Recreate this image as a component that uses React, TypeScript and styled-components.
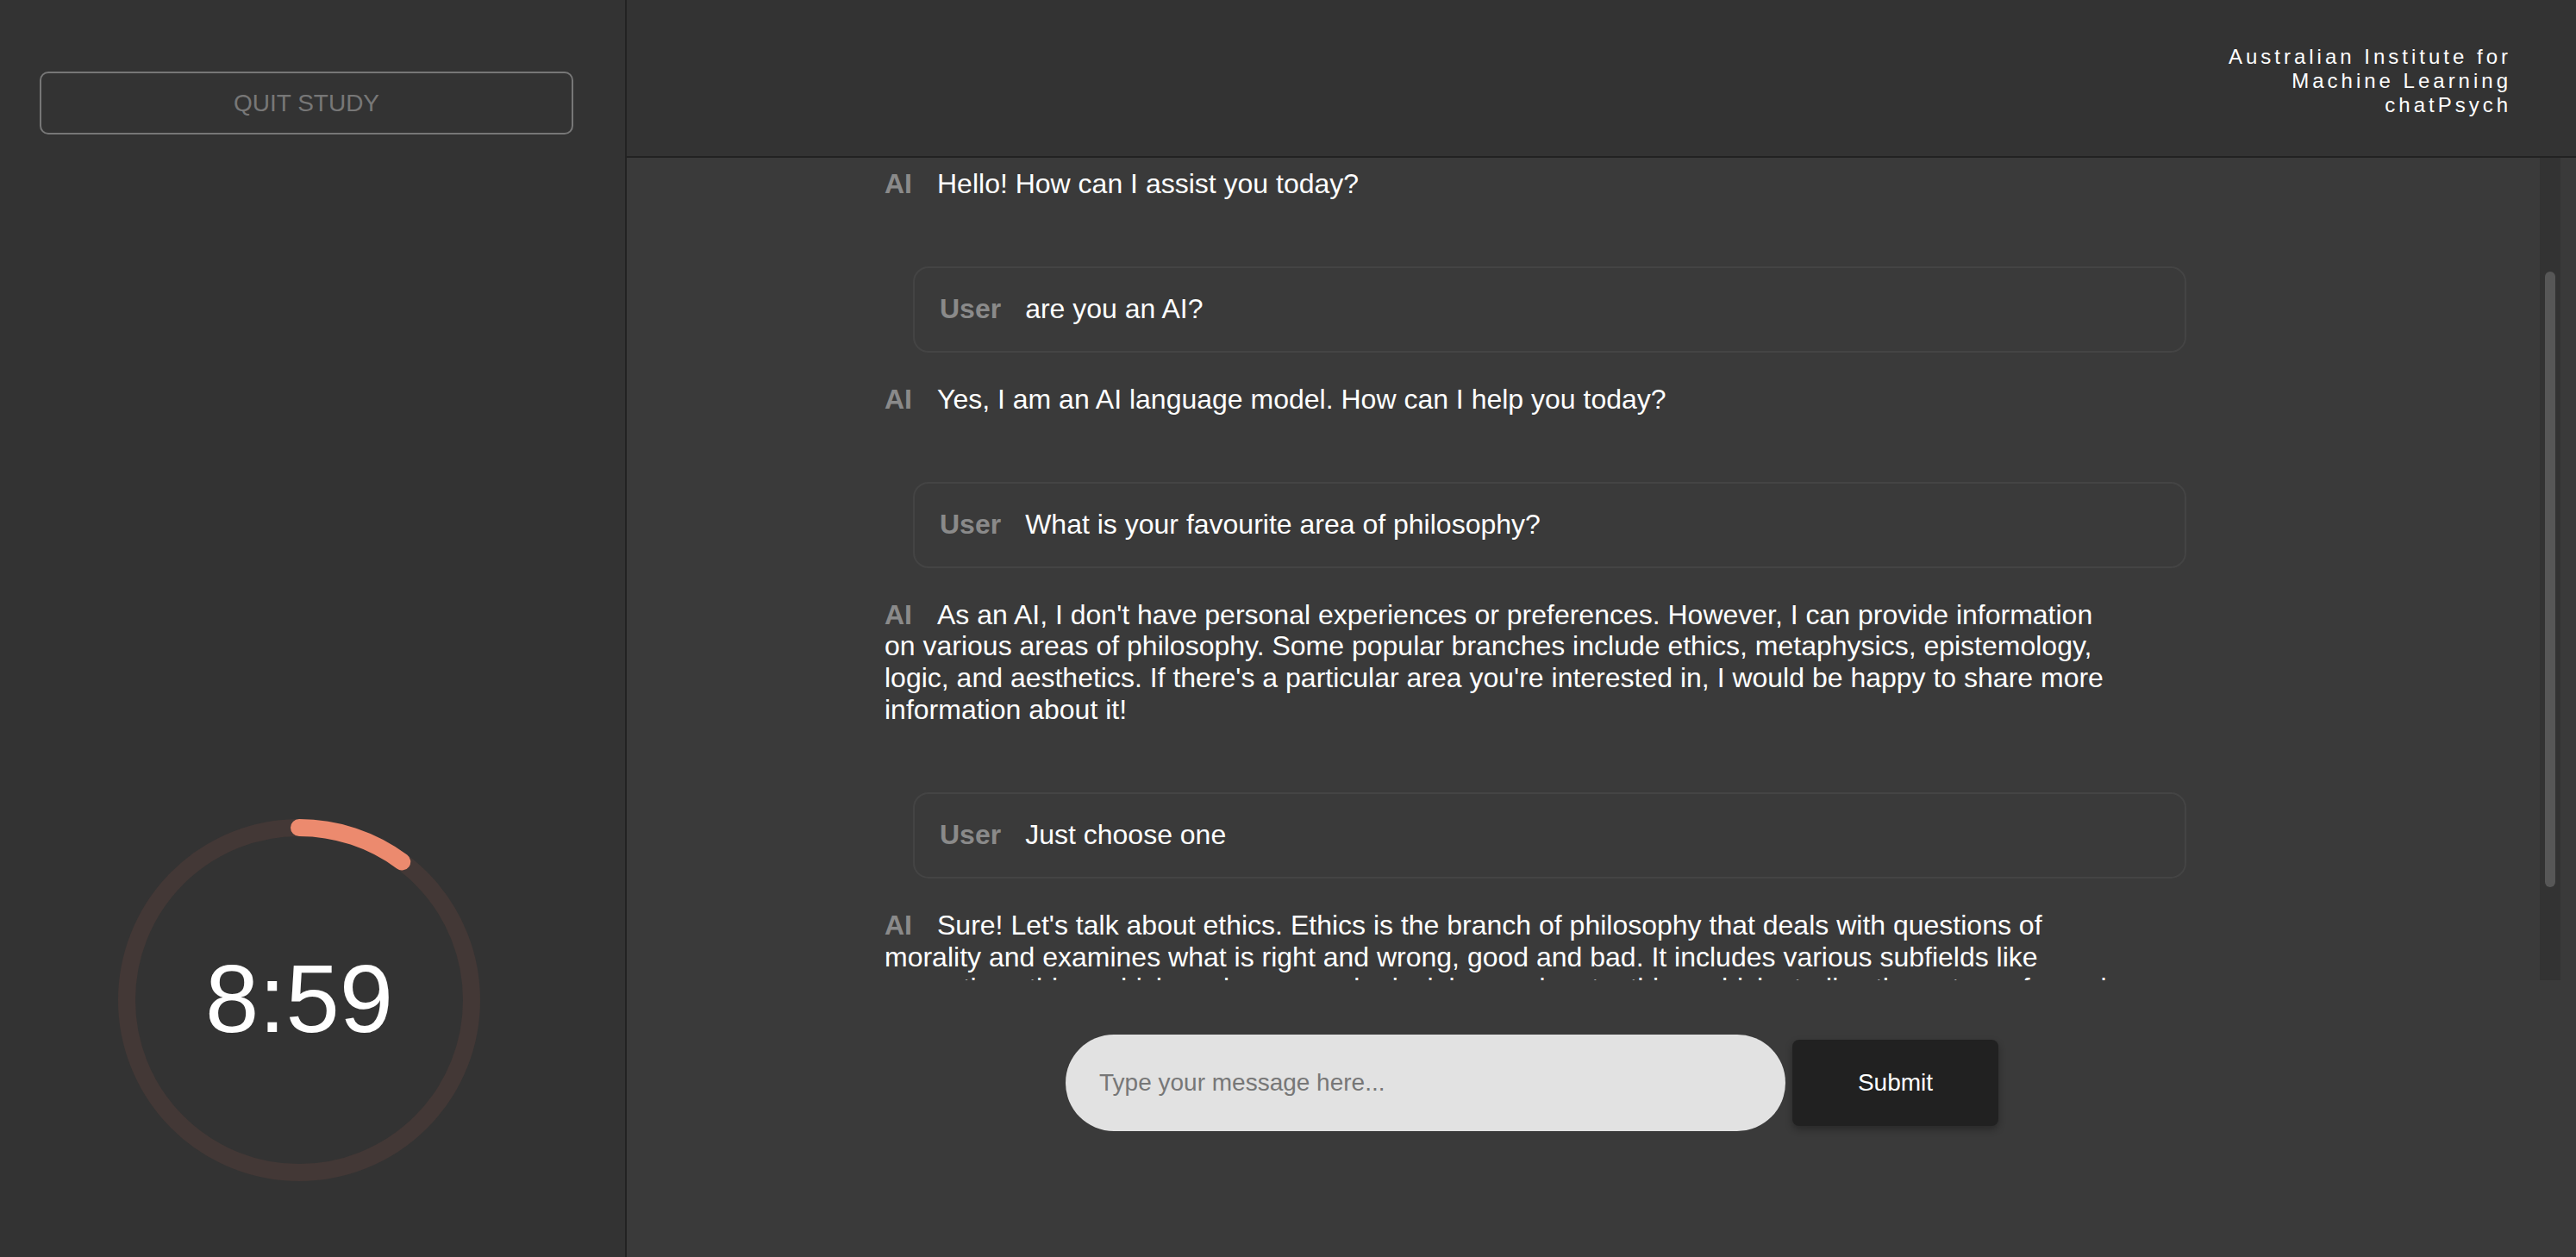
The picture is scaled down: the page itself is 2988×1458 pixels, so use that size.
import React from "react";
import styled, { createGlobalStyle } from "styled-components";

const GlobalStyle = createGlobalStyle`
  html, body {
    margin: 0;
    padding: 0;
    background: #3a3a3a;
    overflow: hidden;
  }
  * {
    box-sizing: border-box;
  }
`;

type Message = { from: "ai" | "user"; text: string };

const messages: Message[] = [
  { from: "ai", text: "Hello! How can I assist you today?" },
  { from: "user", text: "are you an AI?" },
  { from: "ai", text: "Yes, I am an AI language model. How can I help you today?" },
  { from: "user", text: "What is your favourite area of philosophy?" },
  {
    from: "ai",
    text:
      "As an AI, I don't have personal experiences or preferences. However, I can provide information on various areas of philosophy. Some popular branches include ethics, metaphysics, epistemology, logic, and aesthetics. If there's a particular area you're interested in, I would be happy to share more information about it!",
  },
  { from: "user", text: "Just choose one" },
  {
    from: "ai",
    text:
      "Sure! Let's talk about ethics. Ethics is the branch of philosophy that deals with questions of morality and examines what is right and wrong, good and bad. It includes various subfields like normative ethics, which explores moral principles, and metaethics, which studies the nature of moral statements and judgments.",
  },
];

const TOTAL = 600;
const REMAINING = 539;

const Timer: React.FC<{ remaining: number; total: number }> = ({ remaining, total }) => {
  const r = 200;
  const c = 2 * Math.PI * r;
  const done = (total - remaining) / total;
  const mins = Math.floor(remaining / 60);
  const secs = String(remaining % 60).padStart(2, "0");
  return (
    <TimerWrap>
      <svg width="420" height="420" viewBox="0 0 420 420">
        <circle cx="210" cy="210" r={r} fill="none" stroke="#433836" strokeWidth="20" />
        <circle
          cx="210"
          cy="210"
          r={r}
          fill="none"
          stroke="#ec8a6e"
          strokeWidth="20"
          strokeLinecap="round"
          strokeDasharray={`${c * done} ${c}`}
          transform="rotate(-90 210 210)"
        />
      </svg>
      <TimeText>
        {mins}:{secs}
      </TimeText>
    </TimerWrap>
  );
};

export default function App() {
  return (
    <>
      <GlobalStyle />
      <Page>
        <Sidebar>
          <QuitButton>QUIT STUDY</QuitButton>
          <Timer remaining={REMAINING} total={TOTAL} />
        </Sidebar>
        <Main>
          <Header>
            <Brand>
              Australian Institute for
              <br />
              Machine Learning
              <br />
              chatPsych
            </Brand>
          </Header>
          <ChatRow>
            <MessageList>
              {messages.map((m, i) =>
                m.from === "ai" ? (
                  <AiMessage key={i}>
                    <Label>AI</Label>
                    {m.text}
                  </AiMessage>
                ) : (
                  <UserBubble key={i}>
                    <Label>User</Label>
                    <span>{m.text}</span>
                  </UserBubble>
                )
              )}
            </MessageList>
            <ScrollTrack>
              <ScrollThumb />
            </ScrollTrack>
          </ChatRow>
          <Composer>
            <MessageInput placeholder="Type your message here..." />
            <SubmitButton>Submit</SubmitButton>
          </Composer>
        </Main>
      </Page>
    </>
  );
}

const Page = styled.div`
  display: flex;
  width: 100vw;
  height: 100vh;
  font-family: "Liberation Sans", Arial, sans-serif;
  color: #fff;
`;

const Sidebar = styled.aside`
  width: 727px;
  flex-shrink: 0;
  background: #333333;
  border-right: 2px solid #222;
  display: flex;
  flex-direction: column;
  justify-content: space-between;
  padding: 83px 60px 88px 46px;
`;

const QuitButton = styled.button`
  height: 73px;
  width: 619px;
  background: transparent;
  border: 2px solid #777;
  border-radius: 10px;
  color: #777;
  font-family: inherit;
  font-size: 28px;
`;

const TimerWrap = styled.div`
  display: grid;
  place-items: center;
  width: 420px;
  height: 420px;
  margin-left: 91px;

  & > * {
    grid-area: 1 / 1;
  }
`;

const TimeText = styled.div`
  font-size: 112px;
  line-height: 1;
  color: #fff;
  padding-bottom: 2px;
`;

const Main = styled.main`
  flex: 1;
  display: flex;
  flex-direction: column;
  background: #3a3a3a;
  min-width: 0;
`;

const Header = styled.header`
  height: 183px;
  flex-shrink: 0;
  background: #333333;
  border-bottom: 2px solid #222;
  display: flex;
  justify-content: flex-end;
  padding: 52px 79px 0 0;
`;

const Brand = styled.div`
  text-align: right;
  font-size: 24px;
  line-height: 28px;
  letter-spacing: 4px;
  margin-right: -4px;
  color: #fff;
`;

const ChatRow = styled.div`
  height: 954px;
  flex-shrink: 0;
  display: flex;
  padding-right: 18px;
`;

const MessageList = styled.div`
  flex: 1;
  overflow: hidden;
  padding: 12px 0 0 299px;
`;

const Label = styled.span`
  font-weight: bold;
  color: #8a8a8a;
  margin-right: 29px;
`;

const AiMessage = styled.div`
  width: 1432px;
  font-size: 32px;
  line-height: 36.8px;
  margin-bottom: 77px;
`;

const UserBubble = styled.div`
  width: 1477px;
  height: 100px;
  margin: 0 0 36px 33px;
  border: 2px solid #444;
  border-radius: 18px;
  display: flex;
  align-items: center;
  padding-left: 29px;
  font-size: 32px;
  line-height: 37px;

  ${Label} {
    margin-right: 28px;
  }
`;

const ScrollTrack = styled.div`
  width: 24px;
  flex-shrink: 0;
  background: #333;
  padding: 132px 6px 0;
`;

const ScrollThumb = styled.div`
  height: 714px;
  border-radius: 6px;
  background: #575757;
`;

const Composer = styled.div`
  width: 1510px;
  margin: 63px 0 0 295px;
  display: flex;
  justify-content: center;
  align-items: center;
  gap: 8px;
`;

const MessageInput = styled.input`
  width: 835px;
  height: 112px;
  border: none;
  border-radius: 56px;
  background: #e2e2e2;
  padding: 0 40px 0 39px;
  font-family: inherit;
  font-size: 28px;
  color: #222;
  outline: none;

  &::placeholder {
    color: #777;
  }
`;

const SubmitButton = styled.button`
  width: 239px;
  height: 100px;
  border: none;
  border-radius: 8px;
  background: #212121;
  color: #fff;
  font-family: inherit;
  font-size: 28px;
  box-shadow: 0 4px 8px rgba(0, 0, 0, 0.3);
`;
